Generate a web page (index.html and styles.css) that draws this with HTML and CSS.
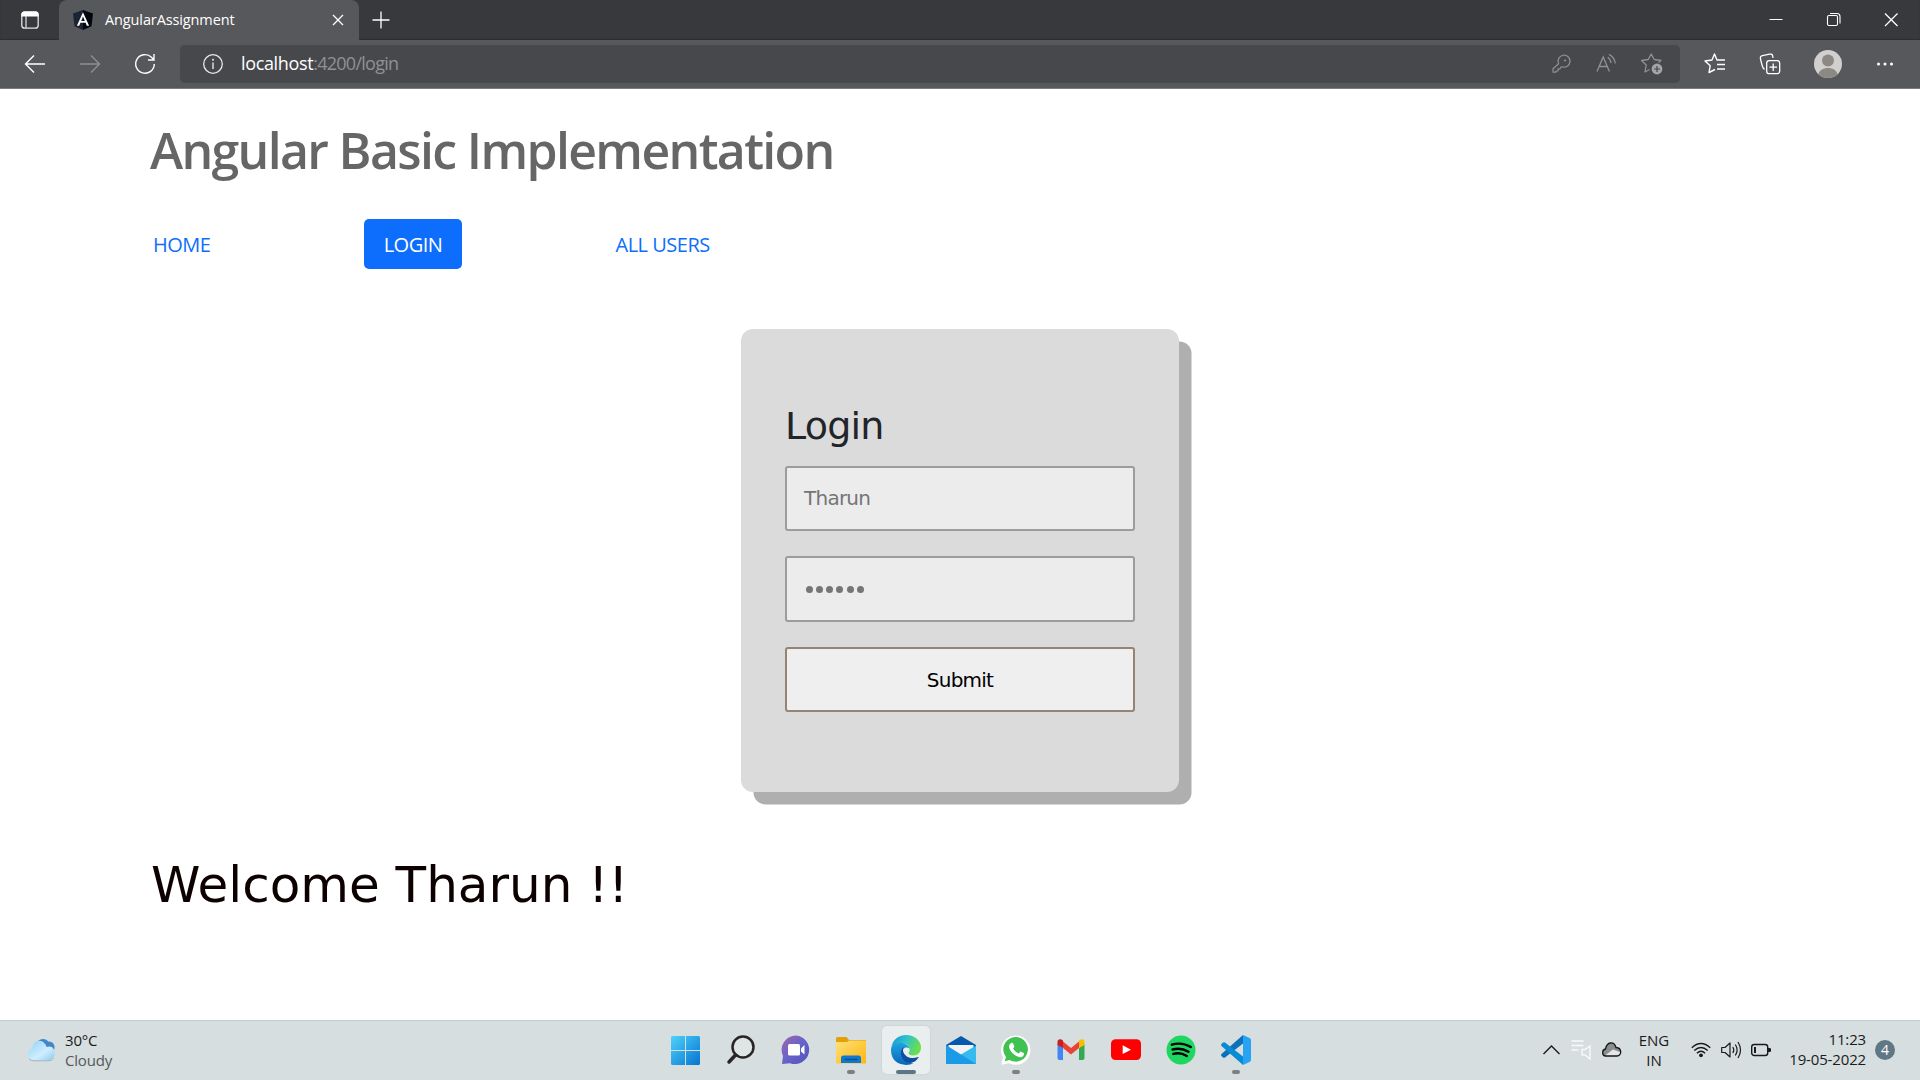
FILE: index.html
```html
<!DOCTYPE html>
<html lang="en">
<head>
<meta charset="utf-8">
<title>AngularAssignment</title>
<link rel="stylesheet" href="styles.css">
</head>
<body>
<div class="screen">
  <header class="titlebar">
    <div class="tab-actions">
      <svg class="icon" viewBox="0 0 24 24"><rect x="3.8" y="3.8" width="16.4" height="16.4" rx="3" fill="none" stroke="#e4e4e4" stroke-width="1.3"/><path d="M3.5 8.5V6.5a3 3 0 0 1 3-3h11a3 3 0 0 1 3 3v2z" fill="#fff"/><path d="M8 8v12" stroke="#e4e4e4" stroke-width="1.2"/></svg>
    </div>
    <div class="tab">
      <svg class="favicon" viewBox="0 0 20 20"><path d="M10 0 0 3.400l1.500 12.900L10 20z" fill="#1c2333"/><path d="M10 0v20l8.500-3.700L20 3.400z" fill="#03060f"/><path d="M10 2.300 3.900 15.800h2.300l1.200-3h5.200l1.200 3h2.300zm0 4.300 1.800 4.300H8.200z" fill="#fff"/></svg>
      <span class="tab-title">AngularAssignment</span>
      <svg class="icon tab-close" viewBox="0 0 24 24"><path d="m7 7 10 10M17 7 7 17" stroke="#fff" stroke-width="1.300"/></svg>
    </div>
    <svg class="icon new-tab" viewBox="0 0 24 24"><path d="M12 3.500v17M3.500 12h17" stroke="#fff" stroke-width="1.300"/></svg>
    <div class="window-controls">
      <span class="control"><svg class="icon" viewBox="0 0 24 24"><path d="M5.500 11.500h13" stroke="#fff"/></svg></span>
      <span class="control"><svg class="icon" viewBox="0 0 24 24"><rect x="5.500" y="7.500" width="10" height="10" rx="1.500" fill="none" stroke="#fff" stroke-width="1.100"/><path d="M8 5.500h7a3 3 0 0 1 3 3v7" fill="none" stroke="#fff" stroke-width="1.100"/></svg></span>
      <span class="control"><svg class="icon" viewBox="0 0 24 24"><path d="m6 5.500 12.500 12.500M18.500 5.500 6 18" stroke="#fff" stroke-width="1.300"/></svg></span>
    </div>
  </header>

  <div class="toolbar">
    <span class="nav-button"><svg class="icon" viewBox="0 0 24 24"><path d="M22 12H2.500M11 3.500 2.500 12l8.500 8.500" fill="none" stroke="#fff" stroke-width="1.400"/></svg></span>
    <span class="nav-button"><svg class="icon" viewBox="0 0 24 24"><path d="M2 12h19.500M13 3.500l8.500 8.500-8.500 8.500" fill="none" stroke="#8d8e91" stroke-width="1.400"/></svg></span>
    <span class="nav-button"><svg class="icon" viewBox="0 0 24 24"><path d="M21.300 12A9.300 9.300 0 1 1 18.500 5.300L20.500 7.500M21 2v6h-6" fill="none" stroke="#fff" stroke-width="1.400"/></svg></span>
    <div class="address">
      <svg class="icon info" viewBox="0 0 24 24"><circle cx="12" cy="12" r="9.300" fill="none" stroke="#e8e8e8" stroke-width="1.300"/><path d="M12 10.500v6.500" stroke="#e8e8e8" stroke-width="1.400"/><circle cx="12" cy="7.800" r="1" fill="#e8e8e8"/></svg>
      <span class="url"><span class="host">localhost</span>:4200/login</span>
      <span class="address-action key"><svg class="icon" viewBox="0 0 24 24"><path d="M9.600 11.700A6 6 0 1 1 13 14.800l-1 .2-1 1.800H9v2.200H7v1.200H4v-3.400z" fill="none" stroke="#909193" stroke-width="1.200" stroke-linejoin="round"/><circle cx="16" cy="8.500" r="1.100" fill="#909193"/></svg></span>
      <span class="address-action read"><svg class="icon" viewBox="0 0 24 24"><path d="M2 19.500 8.200 5l6.200 14.500M4.300 14.500h7.800M12.700 5.300q3 2 3.300 5.700M14 2.400q5.500 3 6.300 9" fill="none" stroke="#909193" stroke-width="1.300"/></svg></span>
      <span class="address-action star"><svg class="icon" viewBox="0 0 24 24"><path d="M9.500 17.500 5 20l1.200-7L1.500 8.500l6.700-1L11.200 2l3 5.500 6.800 1-2.500 2.300" fill="none" stroke="#909193" stroke-width="1.300" stroke-linejoin="round"/><circle cx="17" cy="17" r="5.400" fill="#a3a4a5"/><path d="M17 14v6M14 17h6" stroke="#47484b" stroke-width="1.200"/></svg></span>
    </div>
    <span class="tool favorites"><svg class="icon" viewBox="0 0 24 24"><path d="M12 17.500 6 20.500l1.200-6.800L2 9l7-1 2.500-6L14 8h8M14 12.500h8M14 17h8" fill="none" stroke="#fff" stroke-width="1.400" stroke-linejoin="round"/></svg></span>
    <span class="tool collections"><svg class="icon" viewBox="0 0 24 24"><rect x="8.700" y="8.700" width="13" height="13" rx="2.500" fill="none" stroke="#fff" stroke-width="1.300"/><path d="M15.200 11.500v7.500M11.500 15.200H19M6.500 17.500C4.500 16 4.300 14.500 4 13L2.500 7c-.5-2 .3-3 2-3.400l7-1.400c2-.4 3 .3 3.200 1.800L15 6" fill="none" stroke="#fff" stroke-width="1.300"/></svg></span>
    <span class="tool profile"><svg class="avatar" viewBox="0 0 28 28"><circle cx="14" cy="14" r="14" fill="#d2d0ce"/><circle cx="14" cy="10.500" r="6" fill="#8c8884"/><path d="M4.500 24.300C5 20.500 9 18 14 18s9 2.500 9.500 6.300A14 14 0 0 1 14 28a14 14 0 0 1-9.500-3.700z" fill="#8c8884"/></svg></span>
    <span class="tool more"><svg class="icon" viewBox="0 0 24 24"><circle cx="5.500" cy="12" r="1.500" fill="#fff"/><circle cx="12" cy="12" r="1.500" fill="#fff"/><circle cx="18.500" cy="12" r="1.500" fill="#fff"/></svg></span>
  </div>

  <main class="page">
    <h1 class="page-title">Angular Basic Implementation</h1>
    <nav class="menu">
      <a class="menu-link home">HOME</a>
      <a class="menu-link active">LOGIN</a>
      <a class="menu-link users">ALL USERS</a>
    </nav>
    <form class="card">
      <h2 class="card-title">Login</h2>
      <div class="field">Tharun</div>
      <div class="field password"><i class="dot"></i><i class="dot"></i><i class="dot"></i><i class="dot"></i><i class="dot"></i><i class="dot"></i></div>
      <div class="field submit">Submit</div>
    </form>
    <p class="welcome">Welcome Tharun !!</p>
  </main>

  <footer class="taskbar">
    <div class="weather">
      <svg class="weather-icon" viewBox="0 0 30 26"><defs><linearGradient id="cl" x1="0" y1="0" x2="1" y2="1"><stop offset="0" stop-color="#8fd2f8"/><stop offset=".6" stop-color="#cfeeff"/><stop offset="1" stop-color="#8fc9ef"/></linearGradient></defs><path d="M11 5c4-5 10-3 11-.5 5-.5 8 4 6 8.500l-5 1z" fill="#4287ca"/><path d="M7 23a6 6 0 0 1-1-11.500C7 4 15 1 19 7c1 1 1.500 2.500 1.500 3C26 8 29 12 28.500 16.500 28.300 21 26 23 22 23z" fill="url(#cl)"/><path d="M3 22q2 1.800 5 1.800h14q4 0 5.500-2.500" fill="none" stroke="#a4b4bd" stroke-width="1"/></svg>
      <div class="weather-text"><span>30°C</span><span class="muted">Cloudy</span></div>
    </div>
    <div class="apps">
      <span class="app"><svg class="app-icon" viewBox="0 0 30 30"><defs><linearGradient id="win" x1="0" y1="0" x2="1" y2="1"><stop offset="0" stop-color="#4fd2fb"/><stop offset="1" stop-color="#0574d0"/></linearGradient></defs><path d="M1.500 1H14v14H0V2.500A1.500 1.500 0 0 1 1.500 1zM15 1h12.500A1.500 1.500 0 0 1 29 2.500V15H15zM0 16h14v14H1.500A1.500 1.500 0 0 1 0 28.500zM15 16h14v12.500a1.500 1.500 0 0 1-1.500 1.500H15z" fill="url(#win)"/></svg></span>
      <span class="app"><svg class="app-icon" viewBox="0 0 30 30"><circle cx="17" cy="12" r="10.500" fill="#dfe4e4" stroke="#292525" stroke-width="2.500"/><path d="m9.500 20-6.500 7" stroke="#292525" stroke-width="3.500" stroke-linecap="round"/></svg></span>
      <span class="app"><svg class="app-icon" viewBox="0 0 30 30"><defs><linearGradient id="chat" x1="0" y1="0" x2="1" y2="1"><stop offset="0" stop-color="#a266b0"/><stop offset=".5" stop-color="#6763c8"/><stop offset="1" stop-color="#5053bc"/></linearGradient></defs><path d="M15 .5A14.300 14.300 0 1 1 9 28.200L1 29l1-8A14.300 14.300 0 0 1 15 .5z" fill="url(#chat)"/><rect x="7" y="9" width="12" height="11.500" rx="1.500" fill="#fff"/><path d="M20 13.500 23.500 10v9.500L20 16.500z" fill="#fff"/></svg></span>
      <span class="app running"><svg class="app-icon" viewBox="0 0 30 30"><defs><linearGradient id="fold" x1="0" y1="0" x2="1" y2="1"><stop offset="0" stop-color="#ffe17a"/><stop offset="1" stop-color="#fbb70f"/></linearGradient></defs><path d="M0 3.500Q0 2 1.500 2h9L13 5h17v3H0z" fill="#e3a008"/><path d="M0 7h11l2-1.500h17v23H0z" fill="url(#fold)"/><path d="M5 28v-5a2.500 2.500 0 0 1 2.500-2.500h15A2.500 2.500 0 0 1 25 23v5z" fill="#1078cd"/><path d="M8.500 24.500h13" stroke="#0a4e94" stroke-width="1.400"/></svg></span>
      <span class="app running current"><svg class="app-icon" viewBox="0 0 30 30"><defs><linearGradient id="e1" x1="0" y1="0" x2="1" y2=".4"><stop offset="0" stop-color="#168ed9"/><stop offset=".5" stop-color="#2dc3ce"/><stop offset="1" stop-color="#69e04b"/></linearGradient><linearGradient id="e2" x1="0" y1="0" x2="0" y2="1"><stop offset="0" stop-color="#1ca4df"/><stop offset="1" stop-color="#0966bd"/></linearGradient></defs><path d="M.3 13C1.300 5 7.500 0 15 0c9 0 15 6 15 12.500 0 5-3.700 8-7.500 8-3.500 0-4.900-1.300-4.900-2.500 0-1 1.100-1.400 1.100-3.300 0-4-4.200-6.700-8.700-6.700C5.500 8 2.300 10 .3 13z" fill="url(#e1)"/><path d="M.2 13C2.500 8 9 6.500 13.500 8.500c3 1.400 5 3.500 5.200 5.500-3-3.500-8.700-.5-8.200 5 .6 6 7 9 12 9.500C14 32-1 29.500.1 14z" fill="url(#e2)"/><path d="M13 12c-3 2-4 6-2.200 10 2.500 6.500 10 8 15 2.800.6-.8 1.800-2.300 1.800-2.300q.4-.8-.5-.5c-6 2.600-12.500.5-14.600-4.500-.8-2-.5-4 .5-5.500z" fill="#0c4f9e"/></svg></span>
      <span class="app"><svg class="app-icon" viewBox="0 0 30 30"><path d="M0 10 15 1l15 9v4H0z" fill="#0759ad"/><path d="M2.500 10h25v8L15 25 2.500 17z" fill="#f1f3f5"/><path d="M30 10.500V29H0l15-9.500z" fill="#35bbee"/><path d="M15 19.500 30 28.900H0V10z" fill="#1b9ae8"/></svg></span>
      <span class="app running"><svg class="app-icon" viewBox="0 0 30 30"><path d="M.3 29.700 2 22.500A14.700 14.700 0 1 1 8 28.200z" fill="#fff"/><path d="M3.700 26.300 5 22A12.300 12.300 0 1 1 8.500 25z" fill="#3fc250"/><path d="M10 8.200c.6-.7 1.700-.5 2 .1l1.300 3c.3.800-1.300 1.900-1.200 2.300 1.400 2.600 3.200 4 5.500 4.900.6.100 1.500-2 2.100-1.900l3 1.500c.8.600 0 3.300-2 3.900-5 1.500-13.600-6.300-12.500-11.400.1-.9.900-2 1.800-2.400z" fill="#fff"/></svg></span>
      <span class="app"><svg class="app-icon" viewBox="0 0 30 30"><path d="M1.500 9 7 13v12H3.500a2 2 0 0 1-2-2z" fill="#4285f4"/><path d="M28.500 9 23 13v12h3.500a2 2 0 0 0 2-2z" fill="#34a853"/><path d="M7 6.500 15 13l8-6.500V13l-8 6.500L7 13z" fill="#ea4335"/><path d="M1.500 10V7c0-3 3-3.800 5.500-1.500V13z" fill="#c5221f"/><path d="M28.500 10V7c0-3-3-3.800-5.500-1.500V13z" fill="#fbbc04"/></svg></span>
      <span class="app"><svg class="app-icon" viewBox="0 0 30 30"><rect y="4.300" width="30" height="20.700" rx="4.500" fill="#f00"/><path d="M11.700 10.300 20 14.700 11.700 19z" fill="#fff"/></svg></span>
      <span class="app"><svg class="app-icon" viewBox="0 0 30 30"><circle cx="15" cy="15" r="14.500" fill="#1ed760"/><path d="M5.800 9.700q10-3 19 2.300M6.500 14.500q8.500-2.300 16 2.200M7.300 18.900q7-2 13.500 2" fill="none" stroke="#000" stroke-width="2.400" stroke-linecap="round"/></svg></span>
      <span class="app running"><svg class="app-icon" viewBox="0 0 30 30"><path d="M22 0v8.500L4 22.500q-1 .7-2 0l-1.500-1.500q-1-1 0-2z" fill="#0b71b8"/><path d="M22 30v-8.500L4 7.500q-1-.7-2 0L.5 9q-1 1 0 2z" fill="#078bd4"/><path d="m22 0 6.500 3Q30 3.700 30 5v20q0 1.300-1.500 2L22 30z" fill="#26a4f3"/></svg></span>
    </div>
    <div class="tray">
      <svg class="tray-icon chevron" viewBox="0 0 20 20"><path d="m2.500 14 8-8 8 8" fill="none" stroke="#1b1b1b" stroke-width="1.400"/></svg>
      <svg class="tray-icon output" viewBox="0 0 20 20"><path d="M.5 1h12M.5 5.500h12M.5 10h7M11 9.500h3l5-3.500v13l-5-4h-3z" fill="none" stroke="#fafafa" stroke-width="1.400"/></svg>
      <svg class="tray-icon cloud" viewBox="0 0 20 20"><path d="M4 16a3.700 3.700 0 0 1 .5-7C6 1.500 13 1 15 7.500c6 0 6 8.500 1 8.500z" fill="#8b8d8e"/><path d="M4 15.500 12 9.500 20 12.500Q19 16 16 16H5z" fill="#e4e7e7"/><path d="M4.300 16a3.600 3.600 0 0 1 .2-7C6 1.500 13 1 15 7.500c6.200.3 6 8.500 1 8.500z" fill="none" stroke="#161616" stroke-width="1.300"/></svg>
      <div class="language"><span>ENG</span><span>IN</span></div>
      <svg class="tray-icon wifi" viewBox="0 0 20 20"><g fill="none" stroke="#1b1b1b" stroke-width="1.400"><path d="M.8 7.800q9.200-8.500 18.400 0M3.300 10.600q6.700-6.400 13.400 0M5.900 13.300q4.100-4 8.200 0"/></g><circle cx="10" cy="15.300" r="1.900" fill="#1b1b1b"/></svg>
      <svg class="tray-icon volume" viewBox="0 0 20 20"><path d="M.7 7.500H4l5-4.500v14l-5-4.500H.700zM11.800 7q2 3 0 6M14.300 4.500q3.700 5.500 0 11M17 2q5 8 0 16" fill="none" stroke="#1b1b1b" stroke-width="1.200" stroke-linejoin="round"/></svg>
      <svg class="tray-icon battery" viewBox="0 0 20 20"><rect x=".7" y="4.500" width="16" height="11" rx="2.500" fill="none" stroke="#1b1b1b" stroke-width="1.400"/><rect x="3" y="7" width="2" height="6" fill="#1b1b1b"/><path d="M17 8h1.500q1.500 0 1.500 1v2q0 1-1.500 1H17z" fill="#1b1b1b"/></svg>
      <div class="clock"><span>11:23</span><span>19-05-2022</span></div>
      <span class="badge">4</span>
    </div>
  </footer>
</div>
</body>
</html>
```
FILE: styles.css
```css
* { box-sizing: border-box; }
body {
  margin: 0;
  background: #fff;
  font-family: "Open Sans", "Noto Sans", sans-serif;
  overflow: hidden;
}
.screen { width: 1920px; height: 1080px; display: flex; flex-direction: column; }
.icon { width: 24px; height: 24px; flex: none; display: block; }

.titlebar {
  height: 40px;
  display: flex;
  align-items: stretch;
  background: #38393c;
  box-shadow: inset 0 -1px 1px #2d2e30;
}
.tab-actions { width: 59px; display: flex; align-items: center; padding-left: 18px; }
.tab {
  width: 300px;
  display: flex;
  align-items: center;
  padding: 0 9px 0 14px;
  background: #57585c;
  border-radius: 8px 8px 0 0;
}
.favicon { width: 20px; height: 20px; }
.tab-title { margin-left: 12px; color: #fff; font-size: 14.5px; letter-spacing: -.12px; white-space: nowrap; line-height: 38px; }
.tab-close { margin-left: auto; }
.new-tab { margin: 8px 0 0 9.500px; }
.window-controls { margin-left: auto; display: flex; }
.control { width: 57.500px; display: flex; align-items: center; justify-content: center; }

.toolbar {
  height: 49px;
  display: flex;
  align-items: center;
  padding: 0 0 1px 7px;
  background: #57585c;
  border-bottom: 1px solid #7b7c7f;
}
.nav-button { width: 55px; display: flex; justify-content: center; }
.address {
  width: 1500px;
  height: 38px;
  margin-left: 8px;
  display: flex;
  align-items: center;
  border-radius: 5px;
  background: #47484b;
}
.info { margin-left: 20.500px; }
.url { margin-left: 16.500px; padding-bottom: 2px; color: #909193; font-size: 18px; letter-spacing: -.75px; line-height: 36px; }
.host { color: #fff; letter-spacing: -.35px; }
.key { margin-left: auto; }
.read { margin-left: 22px; }
.star { margin: 0 16px 0 21px; }
.favorites { margin-left: 23px; }
.collections { margin-left: 31px; }
.profile { margin-left: 32px; }
.more { margin-left: 31px; }
.avatar { width: 28px; height: 28px; display: block; }

.page { height: 931px; padding: 27px 150px 0; display: flex; flex-direction: column; align-items: flex-start; }
.page-title { margin: 0; color: #666; font-size: 50px; font-weight: 600; line-height: 68px; letter-spacing: -1.650px; white-space: nowrap; }
.menu { margin-top: 35px; height: 50px; display: flex; align-items: center; }
.menu-link { height: 50px; padding-top: 1px; color: #0d6efd; font-size: 20px; line-height: 50px; letter-spacing: -.5px; white-space: nowrap; }
.home { width: 214px; padding-left: 3px; }
.active { width: 98px; text-align: center; color: #fff; background: #0d6efd; border-radius: 5px; }
.users { margin-left: 153.500px; }
.card {
  align-self: center;
  width: 438px;
  height: 463px;
  margin-top: 60px;
  padding: 73px 44px 0;
  border-radius: 12px;
  background: #dbdbdb;
  box-shadow: 12.500px 12.500px 0 #afafaf;
  font-family: "DejaVu Sans", sans-serif;
}
.card-title { margin: 0; height: 64px; color: #212529; font-size: 38px; font-weight: 400; line-height: 48px; letter-spacing: -.8px; }
.field {
  height: 65px;
  margin-bottom: 25px;
  padding: 0 17px;
  border: 2px solid #9c9c9c;
  border-radius: 3px;
  background: #ececec;
  color: #757575;
  font-size: 20px;
  line-height: 61px;
  letter-spacing: -.75px;
}
.password { height: 66px; display: flex; align-items: center; gap: 3.300px; padding-left: 18.500px; }
.dot { width: 7px; height: 7px; border-radius: 50%; background: #757575; }
.submit { border-color: #938475; background: #efefef; color: #000; text-align: center; line-height: 63px; }
.welcome {
  margin: 56px 0 0 1px;
  color: #0c0000;
  font: 50px/74px "DejaVu Sans", sans-serif;
  white-space: nowrap;
}

.taskbar {
  height: 60px;
  display: grid;
  grid-template-columns: 658px 605px 1fr;
  background: #d6dedf;
  box-shadow: inset 0 1px 0 #c5cecf;
  color: #1b1b1b;
  font-size: 15px;
  line-height: 20px;
}
.weather { display: flex; align-items: center; padding-left: 26px; }
.weather-icon { width: 30px; height: 26px; }
.weather-text { margin-left: 9px; padding-bottom: 1px; display: flex; flex-direction: column; letter-spacing: -.2px; }
.muted { color: #55595a; }
.apps { display: flex; }
.app { position: relative; width: 55px; display: flex; align-items: center; justify-content: center; }
.app-icon { width: 30px; height: 30px; position: relative; }
.running::after {
  content: "";
  position: absolute;
  bottom: 6px;
  left: 24px;
  width: 8px;
  height: 4px;
  border-radius: 2px;
  background: #7c8080;
}
.current::before {
  content: "";
  position: absolute;
  inset: 6px 3px 6px 4px;
  border-radius: 5px;
  background: #e9eeef;
  box-shadow: 0 0 1px 1px #cfd7d8;
}
.current::after { left: 18px; width: 20px; background: #5e7684; }
.tray { display: flex; align-items: center; padding-left: 278px; }
.tray-icon { width: 20px; height: 20px; flex: none; overflow: visible; }
.output { margin-left: 10px; }
.cloud { margin-left: 10px; }
.language { width: 50px; margin-left: 8px; padding-bottom: 1px; display: flex; flex-direction: column; align-items: center; }
.wifi { margin-left: 12px; }
.volume, .battery { margin-left: 10px; }
.clock { width: 95px; padding-bottom: 2px; display: flex; flex-direction: column; align-items: flex-end; letter-spacing: -.15px; white-space: nowrap; }
.badge {
  width: 20px;
  height: 20px;
  margin-left: 9px;
  border-radius: 50%;
  background: #607785;
  color: #fff;
  text-align: center;
  font-size: 14px;
}
```
